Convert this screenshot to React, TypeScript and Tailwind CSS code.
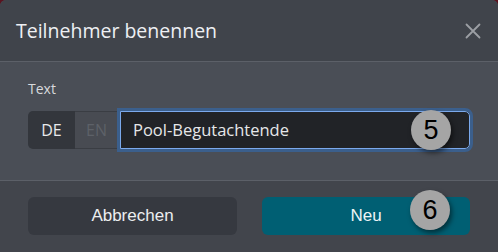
import React from "react";

function Badge({ n }: { n: string }) {
  return (
    <div className="absolute right-[18px] top-1/2 -translate-y-1/2 w-[40px] h-[40px] rounded-full bg-[#a5a5a5] flex items-center justify-center text-black text-[27px] leading-none shadow-[2px_3px_5px_rgba(0,0,0,0.5)] [font-family:'Liberation_Sans',Arial,sans-serif]">
      {n}
    </div>
  );
}

export default function App() {
  return (
    <div className="w-[498px] h-[252px] bg-[#5a1420] overflow-hidden">
      <div className="w-full h-full rounded-t-[6px] overflow-hidden flex flex-col bg-[#4a4e56]">
        <div className="h-[62px] bg-[#40444b] border-b border-[#5c6068] flex items-center justify-between pl-[16px] pr-[17px] shrink-0">
          <span className="text-[#eef0f3] text-[19.5px] [font-family:'Open_Sans',Lato,sans-serif] pt-[1px]">Teilnehmer benennen</span>
          <svg width="16" height="16" viewBox="0 0 16 16">
            <path d="M1.5 1.5 L14.5 14.5 M14.5 1.5 L1.5 14.5" stroke="#9c9fa4" strokeWidth="1.8" strokeLinecap="round" />
          </svg>
        </div>
        <div className="h-[119px] bg-[#4a4e56] border-b border-[#5c6068] px-[28px] pt-[18px] shrink-0">
          <div className="text-[#d8dadd] text-[14px] [font-family:'Open_Sans',Lato,sans-serif] leading-[18px]">Text</div>
          <div className="mt-[13px] flex h-[38px]">
            <div className="w-[47px] bg-[#33363c] rounded-l-[5px] flex items-center justify-center text-[#e8e9eb] text-[16px] [font-family:'Open_Sans',Lato,sans-serif]">DE</div>
            <div className="w-[43px] bg-[#484b52] border-y border-[#3a3d43] flex items-center justify-center text-[#5d6168] text-[16px] [font-family:'Open_Sans',Lato,sans-serif]">EN</div>
            <div className="relative flex-1 ml-[2px] bg-[#212327] border border-[#7ba9ec] rounded-r-[5px] outline outline-[3px] outline-[#3b5f8c] flex items-center pl-[12px] text-[#e6e7e9] text-[16.5px] [font-family:'Open_Sans',Lato,sans-serif]">
              Pool-Begutachtende
              <Badge n="5" />
            </div>
          </div>
        </div>
        <div className="flex-1 bg-[#42454c] px-[28px] pt-[16px] flex gap-[25px]">
          <button className="w-[209px] h-[38px] rounded-[6px] bg-[#363940] text-[#eceef0] text-[17px] [font-family:'Liberation_Sans',Arial,sans-serif]">Abbrechen</button>
          <button className="relative w-[208px] h-[38px] rounded-[6px] bg-[#005f73] text-[#eef4f6] text-[17px] [font-family:'Liberation_Sans',Arial,sans-serif]">
            Neu
            <div className="absolute right-[20px] top-[-7px] w-[40px] h-[40px] rounded-full bg-[#a5a5a5] flex items-center justify-center text-black text-[27px] leading-none shadow-[2px_3px_5px_rgba(0,0,0,0.5)] [font-family:'Liberation_Sans',Arial,sans-serif]">6</div>
          </button>
        </div>
      </div>
    </div>
  );
}
